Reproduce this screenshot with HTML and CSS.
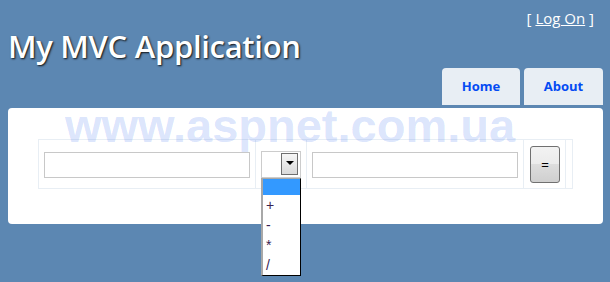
FILE: index.html
```html
<!DOCTYPE html>
<html>
<head>
<meta charset="utf-8">
<title>My MVC Application</title>
<link rel="stylesheet" href="styles.css">
</head>
<body>
<div class="page">
  <header class="header">
    <h1 class="title">My MVC Application</h1>
    <div class="side">
      <div class="login">[ <a href="#" class="login-link">Log On</a> ]</div>
      <nav class="menu">
        <a href="#" class="tab">Home</a>
        <a href="#" class="tab">About</a>
      </nav>
    </div>
  </header>
  <main class="main">
    <table class="calc">
      <tr>
        <td><input class="field" type="text"></td>
        <td>
          <div class="combo">
            <div class="combo-box"><span class="combo-arrow"><span class="tri"></span></span></div>
            <ul class="listbox">
              <li class="opt opt-first selected"></li>
              <li class="opt">+</li>
              <li class="opt">-</li>
              <li class="opt">*</li>
              <li class="opt">/</li>
            </ul>
          </div>
        </td>
        <td><input class="field" type="text"></td>
        <td class="btn-cell"><button class="eq" type="button">=</button></td>
        <td class="empty"></td>
      </tr>
    </table>
  </main>
  <div class="watermark">www.aspnet.com.ua</div>
</div>
</body>
</html>
```

FILE: styles.css
```css
html, body {
  margin: 0;
  padding: 0;
}
body {
  background: #5c87b2;
  font-family: "Open Sans", "DejaVu Sans", sans-serif;
  width: 610px;
  height: 282px;
  overflow: hidden;
}
.page {
  position: relative;
  padding: 0 7px 0 8px;
}
.header {
  display: flex;
  justify-content: space-between;
  height: 108px;
}
.title {
  margin: 0;
  padding-top: 26px;
  font-size: 31px;
  line-height: 40px;
  font-weight: 600;
  letter-spacing: -0.3px;
  color: #fff;
  text-shadow: 1px 1px 2px #111;
  white-space: nowrap;
}
.side {
  display: flex;
  flex-direction: column;
  justify-content: space-between;
  align-items: flex-end;
}
.login {
  padding-top: 8px;
  margin-right: 9px;
  font-size: 15px;
  line-height: 20px;
  color: #fff;
  white-space: nowrap;
}
.login-link {
  color: #fff;
  text-decoration: underline;
}
.menu {
  display: flex;
  gap: 4px;
  margin-bottom: 3px;
}
.tab {
  display: block;
  width: 78px;
  height: 37px;
  line-height: 37px;
  text-align: center;
  background: #e8eef4;
  border-radius: 4px 4px 0 0;
  color: #034af3;
  font-weight: 700;
  font-size: 13px;
  text-decoration: none;
}
.tab:last-child {
  width: 79px;
}
.main {
  background: #fff;
  border-radius: 4px;
  height: 116px;
  box-sizing: border-box;
  padding: 31px 30px 0 30px;
}
.calc {
  border-collapse: collapse;
  border: 1px solid #e8eef4;
}
.calc td {
  border: 1px solid #e8eef4;
  padding: 6px 5px 5px 5px;
  vertical-align: middle;
}
.calc td.btn-cell {
  padding-left: 6px;
}
.calc td.empty {
  padding: 0;
  width: 11px;
}
.field {
  display: block;
  box-sizing: border-box;
  width: 206px;
  height: 26px;
  margin: 0;
  border: 1px solid #c8c8c8;
  background: #fff;
  padding: 0 3px;
}
.combo {
  position: relative;
  width: 40px;
  height: 27px;
}
.combo-box {
  box-sizing: border-box;
  width: 40px;
  height: 27px;
  border: 1px solid #cccccc;
  background: #fff;
  display: flex;
  justify-content: flex-end;
  align-items: flex-start;
  padding: 1px 2px 0 0;
}
.combo-arrow {
  box-sizing: border-box;
  width: 17px;
  height: 22px;
  border: 1px solid #6f6f6f;
  background: linear-gradient(#f6f6f6, #dadada);
  display: flex;
  justify-content: center;
  padding-top: 7px;
}
.tri {
  width: 0;
  height: 0;
  border-left: 4px solid transparent;
  border-right: 4px solid transparent;
  border-top: 4px solid #000;
}
.listbox {
  position: absolute;
  top: 27px;
  left: 0;
  width: 40px;
  box-sizing: border-box;
  margin: 0;
  padding: 0;
  list-style: none;
  background: #fff;
  border-top: 1px solid #a8a8a8;
  border-left: 2px solid #a8a8a8;
  border-right: 1px solid #000;
  border-bottom: 1px solid #000;
  z-index: 2;
}
.opt {
  height: 20px;
  line-height: 20px;
  padding-left: 3px;
  font-family: "Liberation Sans", Arial, sans-serif;
  font-size: 14px;
  color: #3a2250;
}
.opt-first {
  height: 16px;
}
.selected {
  background: #3399ff;
}
.eq {
  display: block;
  box-sizing: border-box;
  width: 30px;
  height: 37px;
  margin: 0;
  padding: 0;
  border: 1px solid #707070;
  border-radius: 3px;
  background: linear-gradient(#f2f2f2 0%, #ebebeb 50%, #dddddd 50%, #cfcfcf 100%);
  font-family: "Liberation Sans", Arial, sans-serif;
  font-size: 13px;
  color: #000;
}
.watermark {
  position: absolute;
  left: 65px;
  top: 102px;
  font-family: "Liberation Sans", Arial, sans-serif;
  font-weight: 700;
  font-size: 47px;
  line-height: 47px;
  color: rgba(40, 100, 240, 0.18);
  white-space: nowrap;
  pointer-events: none;
  z-index: 1;
}
```
